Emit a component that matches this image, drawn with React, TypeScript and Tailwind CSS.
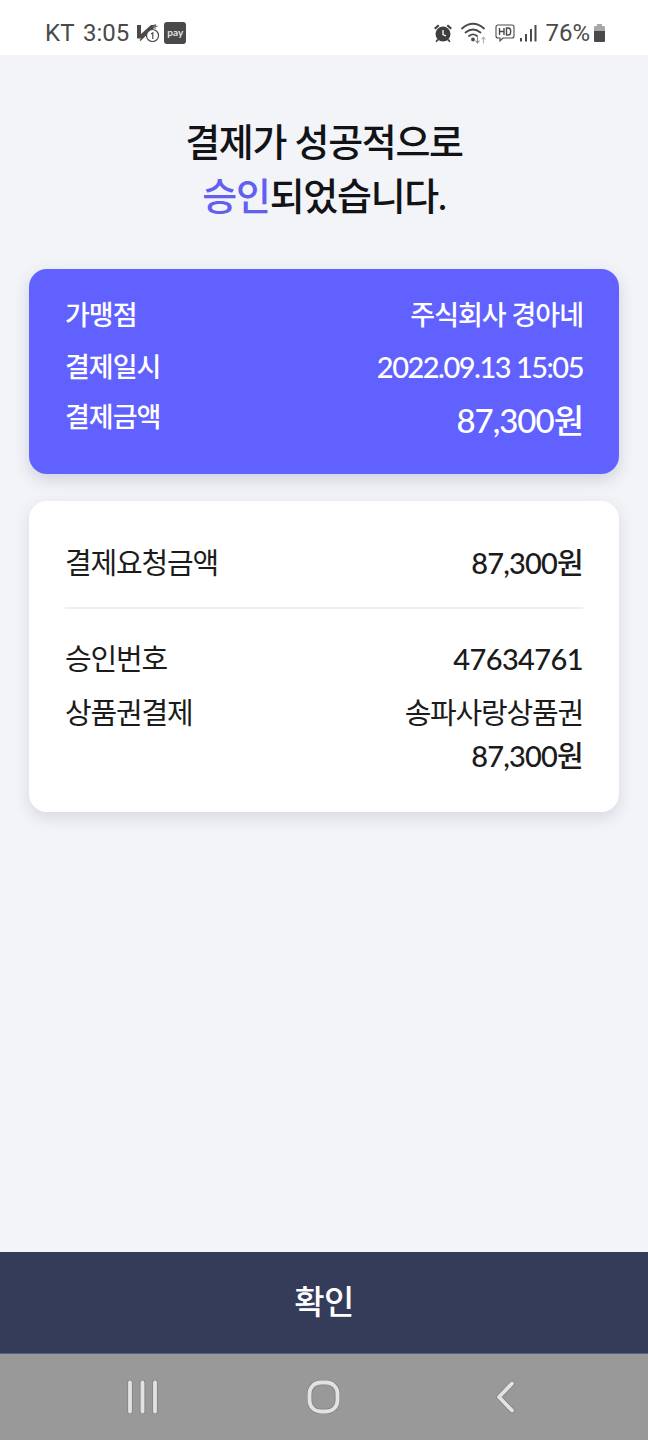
export default function App() {
  const font = { fontFamily: 'Lato, "Noto Sans CJK KR", sans-serif' };
  return (
    <div style={font} className="flex h-[1440px] w-[648px] flex-col overflow-hidden bg-[#f2f4f8]">
      <div className="flex h-[55px] items-center justify-between bg-white pl-[45px] pr-[42px] pt-[11px] text-[#4a4a4a]">
        <div className="flex items-center">
          <span style={{ fontFamily: 'Roboto, sans-serif' }} className="text-[24px] leading-none tracking-[0.3px]">KT</span>
          <span style={{ fontFamily: 'Roboto, sans-serif' }} className="ml-[8px] text-[24px] leading-none">3:05</span>
          <svg className="ml-[8px]" width="24" height="20" viewBox="0 0 24 20" fill="none">
            <path d="M0 2h4v9L14 2h5L5 15.500H0z" fill="#4a4a4a" />
            <path d="M3 17.500 19 2" stroke="#4a4a4a" strokeWidth="1.500" />
            <path d="M18 1v5M15.500 3.500h5" stroke="#777" strokeWidth="1.200" />
            <circle cx="15.500" cy="12.500" r="6" fill="#fff" stroke="#4a4a4a" strokeWidth="1.200" />
            <path d="M14 11l1.800-1.200V16" stroke="#4a4a4a" strokeWidth="1.200" />
          </svg>
          <div className="ml-[3px] flex h-[22px] w-[22px] items-center justify-center rounded-[3px] bg-[#4a4a4a] pb-[2px] text-[10px] font-bold leading-none text-[#e5e5e5]">pay</div>
        </div>
        <div className="flex items-center">
          <svg width="20" height="20" viewBox="0 0 20 20" fill="#3f3f3f">
            <circle cx="10" cy="11" r="7.500" />
            <path d="M1 5l4-3.500 1.500 1.500-4 3.500zM19 5l-4-3.500L13.500 3l4 3.500zM4 16l-1.500 2.500 1 .8L6 17zM16 16l1.500 2.500-1 .8L14 17z" />
            <path d="M10 7v4.500l3 1.500" stroke="#fff" strokeWidth="1.300" fill="none" />
          </svg>
          <svg className="ml-[8px]" width="27" height="22" viewBox="0 0 27 22" fill="none" stroke="#4a4a4a" strokeWidth="1.800" strokeLinecap="round">
            <path d="M1 6.500c7-6 15-6 22 0" />
            <path d="M4.500 10.500c5-4 10-4 15 0" />
            <path d="M8 14c2.500-2 5.500-2 8 0" />
            <circle cx="12" cy="17.500" r="1" fill="#4a4a4a" />
            <path d="M16.500 15v6M14.800 19l1.700 2 1.700-2" stroke="#8a8a8a" strokeWidth="1.100" />
            <path d="M22.500 21v-6M20.800 17l1.700-2 1.700 2" stroke="#b0b0b0" strokeWidth="1.100" />
          </svg>
          <svg className="ml-[7px]" width="20" height="20" viewBox="0 0 20 20" fill="none" stroke="#4a4a4a" strokeWidth="1.100">
            <path d="M3 2h14a2 2 0 0 1 2 2v9a2 2 0 0 1-2 2H8l-3 3v-3H3a2 2 0 0 1-2-2V4a2 2 0 0 1 2-2z" />
            <path d="M4.500 5v7M9 5v7M4.500 8.500H9M11.500 5v7h1.800c3.200 0 3.200-7 0-7z" strokeWidth="1.400" />
          </svg>
          <svg className="ml-[5px]" width="17" height="20" viewBox="0 0 17 20" fill="#4a4a4a">
            <rect x="0" y="15" width="2" height="3.500" />
            <rect x="5" y="11" width="2" height="7.500" />
            <rect x="10" y="6" width="2" height="12.500" />
            <rect x="14.500" y="2" width="2" height="16.500" />
          </svg>
          <span style={{ fontFamily: 'Roboto, sans-serif' }} className="ml-[8px] text-[24px] leading-none">76%</span>
          <svg className="ml-[3px]" width="13" height="20" viewBox="0 0 13 20">
            <path d="M4 1h5v2h2a1 1 0 0 1 1 1v4H1V4a1 1 0 0 1 1-1h2z" fill="#a8a8a8" />
            <path d="M1 8h11v10a1 1 0 0 1-1 1H2a1 1 0 0 1-1-1z" fill="#4a4a4a" />
          </svg>
        </div>
      </div>

      <main className="flex flex-1 flex-col px-[29px]">
        <h1 className="mt-[59px] text-center text-[38px] font-medium leading-[54px] tracking-[-1.300px] text-[#111317]">
          결제가 성공적으로
          <br />
          <span className="text-[#6260f0]">승인</span>되었습니다.
        </h1>

        <section className="mt-[47px] flex h-[205px] flex-col rounded-[18px] bg-[#6161ff] px-[36px] pt-[26px] font-medium text-white shadow-[0_6px_16px_rgba(60,60,90,0.18)]">
          <div className="flex items-center justify-between text-[27px] leading-[40px] tracking-[-1px]">
            <span>가맹점</span>
            <span>주식회사 경아네</span>
          </div>
          <div className="mt-[12px] flex items-center justify-between text-[27px] leading-[40px] tracking-[-1px]">
            <span>결제일시</span>
            <span className="text-[29px] tracking-[-1.500px]">2022.09.13 15:05</span>
          </div>
          <div className="mt-[10px] flex items-start justify-between leading-[40px]">
            <span className="text-[27px] tracking-[-1px]">결제금액</span>
            <span className="mt-[3px] text-[33px] tracking-[-1px]">87,300원</span>
          </div>
        </section>

        <section className="mt-[27px] flex h-[311px] flex-col rounded-[18px] bg-white px-[36px] pt-[42px] text-[#1b1b1b] shadow-[0_6px_16px_rgba(60,60,90,0.14)]">
          <div className="flex items-center justify-between text-[29px] leading-[40px] tracking-[-1.200px]">
            <span>결제요청금액</span>
            <span className="font-medium tracking-[-0.800px]">87,300원</span>
          </div>
          <div className="mt-[24px] h-[2px] bg-[#eceef1]" />
          <div className="mt-[30px] flex items-center justify-between text-[29px] leading-[40px] tracking-[-1.200px]">
            <span>승인번호</span>
            <span className="font-medium tracking-[-0.600px]">47634761</span>
          </div>
          <div className="mt-[12px] flex justify-between text-[29px] leading-[43px] tracking-[-1.200px]">
            <span>상품권결제</span>
            <span className="text-right font-medium tracking-[-0.800px]">
              <span className="font-normal tracking-[-1.200px]">송파사랑상품권</span>
              <br />
              87,300원
            </span>
          </div>
        </section>
      </main>

      <button className="h-[101px] bg-[#343c59] pb-[2px] text-[33px] font-medium tracking-[-0.500px] text-white">확인</button>

      <nav className="flex h-[87px] items-center border-t border-[#5a6180] bg-[#999999] pl-[127px]">
        <svg width="31" height="34" viewBox="0 0 31 34" fill="none" strokeLinecap="round">
          <path d="M3 2.500v29M15.500 2.500v29M28 2.500v29" stroke="#858585" strokeWidth="5.500" />
          <path d="M3 2.500v29M15.500 2.500v29M28 2.500v29" stroke="#e2e2e2" strokeWidth="3.800" />
        </svg>
        <svg className="ml-[149px]" width="33" height="34" viewBox="0 0 33 34" fill="none">
          <rect x="2.500" y="2.500" width="28" height="29" rx="11" stroke="#858585" strokeWidth="5.500" />
          <rect x="2.500" y="2.500" width="28" height="29" rx="11" stroke="#e2e2e2" strokeWidth="3.800" />
        </svg>
        <svg className="ml-[156px]" width="20" height="34" viewBox="0 0 20 34" fill="none" strokeLinecap="round" strokeLinejoin="round">
          <path d="M16 3.500 3 17l13 13.500" stroke="#858585" strokeWidth="5.500" />
          <path d="M16 3.500 3 17l13 13.500" stroke="#e2e2e2" strokeWidth="3.800" />
        </svg>
      </nav>
    </div>
  );
}
